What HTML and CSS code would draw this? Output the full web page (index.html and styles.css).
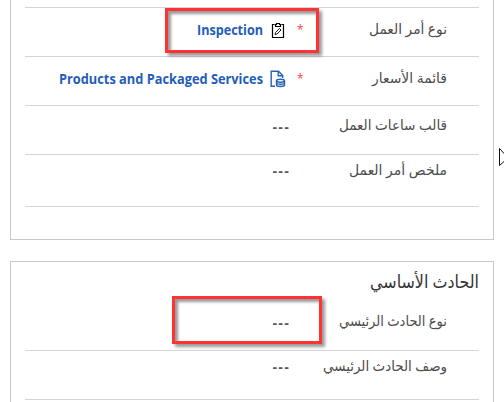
FILE: index.html
```html
<!DOCTYPE html>
<html lang="ar">
<head>
<meta charset="utf-8">
<title>أمر العمل</title>
<link rel="stylesheet" href="styles.css">
</head>
<body>
<main class="page">
  <section class="card card-order">
    <div class="row">
      <div class="value link"><svg class="fit" width="66" height="24"><text x="0" y="17" textLength="66" lengthAdjust="spacingAndGlyphs">Inspection</text></svg>
        <svg class="icon clipboard" width="14" height="17" viewBox="0 0 14 17"><path d="M3.5 2.5H1.5V15.5H12.5V2.5H10.5M4.5 4.5V2.5H5.5V1.5H8.5V2.5H9.5V4.5Z"/><path class="thin" d="M4 12.5L4.5 10.5L8.5 6.5L10 8L6 12Z"/></svg></div>
      <span class="required">*</span>
      <div class="label"><svg class="fit" width="78" height="28"><text x="0" y="17" textLength="78" lengthAdjust="spacingAndGlyphs">نوع أمر العمل</text></svg></div>
    </div>
    <div class="row">
      <div class="value link"><svg class="fit" width="204" height="24"><text x="0" y="17" textLength="204" lengthAdjust="spacingAndGlyphs">Products and Packaged Services</text></svg>
        <svg class="icon pricelist" width="16" height="18" viewBox="0 0 16 18"><path d="M5 16.2H1.2V1.2H8.5L12.7 5.5V8M8.2 1.5V5.8H12.5"/><ellipse cx="10.5" cy="10.7" rx="4" ry="1.5"/><path d="M6.5 10.7V15C6.5 17 14.5 17 14.5 15V10.7M6.5 13C7.5 14.7 13.5 14.7 14.5 13"/></svg></div>
      <span class="required">*</span>
      <div class="label"><svg class="fit" width="75" height="28"><text x="0" y="17" textLength="75" lengthAdjust="spacingAndGlyphs">قائمة الأسعار</text></svg></div>
    </div>
    <div class="row compact">
      <div class="value empty">---</div><span></span>
      <div class="label"><svg class="fit" width="108" height="28"><text x="0" y="17" textLength="108" lengthAdjust="spacingAndGlyphs">قالب ساعات العمل</text></svg></div>
    </div>
    <div class="row compact summary">
      <div class="value empty">---</div><span></span>
      <div class="label"><svg class="fit" width="98" height="28"><text x="0" y="17" textLength="98" lengthAdjust="spacingAndGlyphs">ملخص أمر العمل</text></svg></div>
    </div>
  </section>
  <section class="card card-incident">
    <h2><svg class="fit" width="109" height="34"><text x="0" y="22" textLength="109" lengthAdjust="spacingAndGlyphs">الحادث الأساسي</text></svg></h2>
    <div class="row compact incident-type">
      <div class="value empty">---</div><span></span>
      <div class="label"><svg class="fit" width="108" height="28"><text x="0" y="17" textLength="108" lengthAdjust="spacingAndGlyphs">نوع الحادث الرئيسي</text></svg></div>
    </div>
    <div class="row compact incident-description">
      <div class="value empty">---</div><span></span>
      <div class="label"><svg class="fit" width="124" height="28"><text x="0" y="17" textLength="124" lengthAdjust="spacingAndGlyphs">وصف الحادث الرئيسي</text></svg></div>
    </div>
  </section>
  <div class="mark mark-order"></div>
  <div class="mark mark-incident"></div>
  <svg class="cursor" width="6" height="20" viewBox="0 0 6 20"><path d="M.5 .5V17.5L5 13.5H12.5Z"/></svg>
</main>
</body>
</html>
```
FILE: styles.css
```css
* { box-sizing: border-box; }
body { margin: 0; background: #fff; }
.page {
  position: relative;
  width: 504px;
  height: 402px;
  overflow: hidden;
  font-family: "Open Sans", "Noto Sans", "DejaVu Sans", sans-serif;
  font-size: 14px;
  color: #4c4c4c;
}
.card {
  width: 484px;
  margin-left: 10px;
  padding: 0 14px;
  border: 1px solid #c8c8c8;
}
.card-order { height: 240px; padding-top: 7px; border-top: 0; }
.card-order .row:first-child { border-top: 1px solid #d4d4d4; height: 50px; }
.card-incident { height: 170px; margin-top: 21px; }
.row {
  display: grid;
  grid-template-columns: 265px 20px 1fr;
  height: 49px;
  padding-top: 9px;
  border-bottom: 1px solid #d4d4d4;
}
.compact { padding-top: 7px; }
.summary { height: 52px; padding-top: 3px; }
.incident-type { height: 48px; padding-top: 6px; }
.incident-description { padding-top: 3px; }
.fit { display: block; overflow: visible; }
.fit text { fill: currentColor; }
.value { display: flex; justify-content: flex-end; align-items: flex-start; }
.link {
  gap: 7px;
  padding-right: 4px;
  padding-top: 1px;
  font-size: 14px;
  font-weight: 700;
  color: #1f5db8;
}
.icon { margin-top: 4px; fill: none; stroke: #000; stroke-width: 1.2; }
.clipboard { margin: 4px 1px 0 1px; }
.clipboard .thin { stroke-width: .9; }
.pricelist { margin-top: 3px; stroke: #2861b5; stroke-width: 1.4; }
.required {
  padding: 3px 0 0 7px;
  color: #ff3b30;
  font: 12px/20px "Open Sans", sans-serif;
}
.empty {
  font: 700 14px/28px "Liberation Sans", sans-serif;
  letter-spacing: 1.2px;
  color: #555;
}
.summary .empty, .incident-description .empty { line-height: 26px; }
.label { display: flex; justify-content: flex-end; padding-right: 32px; }
h2 {
  display: flex;
  justify-content: flex-end;
  height: 41px;
  margin: 0;
  padding-top: 4px;
  font-size: 18px;
  font-weight: 400;
  color: #333;
}
.mark {
  position: absolute;
  border: 3px solid #ff3333;
  box-shadow: 3px 3px 3px rgba(0,0,0,.4), inset 3px 3px 3px rgba(0,0,0,.4);
}
.mark-order { left: 165px; top: 8px; width: 154px; height: 45px; }
.mark-incident { left: 172px; top: 296px; width: 150px; height: 48px; }
.cursor { position: absolute; left: 499px; top: 148px; fill: #fff; stroke: #10101c; }
```
